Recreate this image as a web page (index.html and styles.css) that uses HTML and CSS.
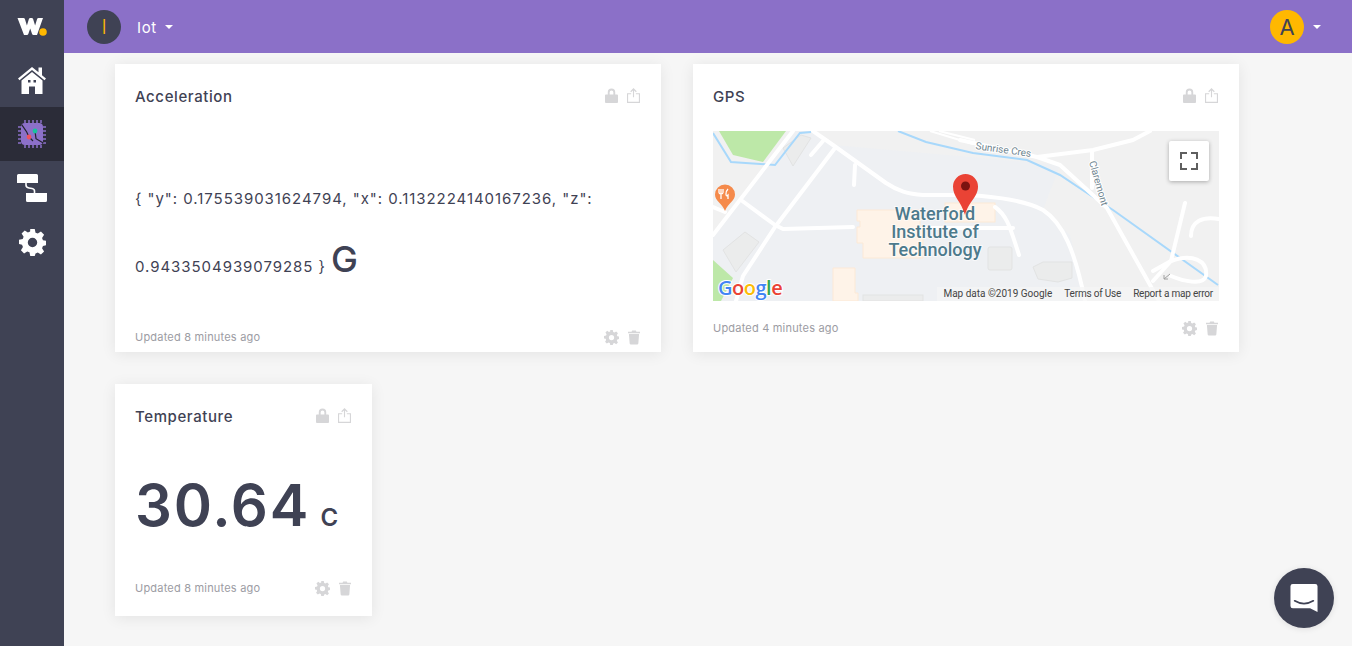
FILE: index.html
```html
<!DOCTYPE html>
<html lang="en">
<head>
    <meta charset="UTF-8">
    <meta name="viewport" content="width=device-width, initial-scale=1.0">
    <title>Dashboard</title>
    <link rel="stylesheet" href="styles.css">
</head>
<body>
    <svg class="defs" width="0" height="0">
        <symbol id="i-lock" viewBox="0 0 14 16">
            <path d="M3 7V4.500a4 4 0 0 1 8 0V7h2a1 1 0 0 1 1 1v7a1 1 0 0 1-1 1H1a1 1 0 0 1-1-1V8a1 1 0 0 1 1-1h2zm2 0h4V4.500a2 2 0 0 0-4 0V7z" fill-rule="evenodd"/>
        </symbol>
        <symbol id="i-share" viewBox="0 0 14 16">
            <path d="M7 0l3.500 3.500-.9.900L7.600 2.500V10H6.400V2.500L4.400 4.400l-.9-.9z"/>
            <path d="M4.500 5.500V6.700H1.200v8.100h11.600V6.700H9.500V5.500H14V16H0V5.500z"/>
        </symbol>
        <symbol id="i-gear" viewBox="0 0 24 24">
            <path fill-rule="evenodd" d="M10 0h4l.7 3.300 2 .8L19.500 2.300l2.800 2.800-1.800 2.800.8 2 3.300.7v3.800l-3.300.7-.8 2 1.800 2.800-2.800 2.800-2.800-1.800-2 .8L14 24h-4l-.7-3.300-2-.8-2.800 1.800-2.800-2.800 1.800-2.800-.8-2L0 13.400V9.600l3.300-.7.800-2-1.800-2.800 2.800-2.800 2.800 1.800 2-.8zM12 7.800a4.200 4.200 0 1 0 0 8.400 4.200 4.200 0 0 0 0-8.400z"/>
        </symbol>
        <symbol id="i-trash" viewBox="0 0 13 15">
            <path d="M4.500 0h4l.6 1.200H13v1.600H0V1.200h3.900zM1 3.800h11l-.8 10.300a1 1 0 0 1-1 .9H2.800a1 1 0 0 1-1-.9z"/>
        </symbol>
    </svg>

    <nav class="sidebar">
        <a class="logo">
            <svg width="30" height="20" viewBox="0 0 30 20">
                <path d="M0.500 1h6a1.500 1.500 0 0 1 1.400 1l2 6.500 2-6.500a1.500 1.500 0 0 1 1.400-1h1.400a1.500 1.500 0 0 1 1.400 1l2 6.500 2-6.500a1.500 1.500 0 0 1 1.400-1H26l-6 17h-3.500a1.500 1.500 0 0 1-1.400-1l-1.900-5.500-1.900 5.500a1.500 1.500 0 0 1-1.400 1H7z" fill="#fff"/>
                <circle cx="26" cy="15" r="3.800" fill="#ffb800"/>
            </svg>
        </a>
        <a class="nav-item">
            <svg width="28" height="30" viewBox="0 0 28 30">
                <path d="M14 2L0 13.500l1.500 1.800L14 5l12.500 10.300 1.500-1.800-4-3.300V2.500h-3.500v4.800z" fill="#fff"/>
                <path fill-rule="evenodd" d="M14 7L3.500 15.600V29h7.500v-7.500h6V29h7.500V15.600zM10 15h2.500v2.500H10zm5.500 0H18v2.500h-2.500z" fill="#fff"/>
            </svg>
        </a>
        <a class="nav-item active">
            <svg width="28" height="28" viewBox="0 0 28 28">
                <path d="M7 0v3M11 0v3M15 0v3M19 0v3M23 0v3M7 25v3M11 25v3M15 25v3M19 25v3M23 25v3M0 7h3M0 11h3M0 15h3M0 19h3M0 23h3M25 7h3M25 11h3M25 15h3M25 19h3M25 23h3" stroke="#8c70c9" stroke-width="1.500"/>
                <rect x="3" y="3" width="22" height="22" rx="4" fill="#8c70c9"/>
                <path d="M3.700 4.700L8.700 12 11 17 15 21M17 11L18 18.700 25.300 23" fill="none" stroke="#23242e" stroke-width="1.200"/>
                <circle cx="11" cy="17" r="2.400" fill="#f0525f"/>
                <circle cx="17" cy="11" r="2.400" fill="#19c2a0"/>
            </svg>
        </a>
        <a class="nav-item">
            <svg width="30" height="28" viewBox="0 0 30 28">
                <path d="M0 1.500A1.500 1.500 0 0 1 1.500 0h18A1.500 1.500 0 0 1 21 1.500V9H0zM9 19h21v7.500a1.500 1.500 0 0 1-1.500 1.500h-18A1.500 1.500 0 0 1 9 26.500z" fill="#fff"/>
                <path d="M9 9v2q0 2.500 3 3l3 .5q2.500.5 2.500 2.500v2" fill="none" stroke="#fff" stroke-width="1.600"/>
            </svg>
        </a>
        <a class="nav-item">
            <svg class="nav-gear" width="27" height="27"><use href="#i-gear"/></svg>
        </a>
    </nav>

    <div class="page">
        <header class="topbar">
            <div class="project">
                <span class="project-badge">I</span>
                <span class="project-name">Iot</span>
                <span class="caret"></span>
            </div>
            <div class="account">
                <span class="account-badge">A</span>
                <span class="caret"></span>
            </div>
        </header>

        <main class="widgets">
            <section class="card card-wide card-accel">
                <div class="card-head">
                    <h2>Acceleration</h2>
                    <div class="tools">
                        <svg class="lock" width="13" height="15"><use href="#i-lock"/></svg>
                        <svg class="share" width="13" height="15"><use href="#i-share"/></svg>
                    </div>
                </div>
                <div class="card-body">
                    <p class="reading">{ "y": 0.175539031624794, "x": 0.1132224140167236, "z": 0.9433504939079285 } <span class="reading-unit">G</span></p>
                </div>
                <div class="card-foot">
                    <span>Updated 8 minutes ago</span>
                    <div class="tools">
                        <svg width="15" height="15"><use href="#i-gear"/></svg>
                        <svg width="12" height="15"><use href="#i-trash"/></svg>
                    </div>
                </div>
            </section>

            <section class="card card-wide">
                <div class="card-head">
                    <h2>GPS</h2>
                    <div class="tools">
                        <svg class="lock" width="13" height="15"><use href="#i-lock"/></svg>
                        <svg class="share" width="13" height="15"><use href="#i-share"/></svg>
                    </div>
                </div>
                <div class="map">
                    <svg class="map-art" width="506" height="170" viewBox="0 0 506 170">
                        <rect width="506" height="170" fill="#f1f1f1"/>
                        <path d="M80 0L0 104V170H372L370 157 357 104 330 79 347 34 120 14 100 0z" fill="#eef0f3"/>
                        <path d="M6 0H73L50 31 20 24z" fill="#bde8a8"/>
                        <path d="M0 129L20 147 8 170H0z" fill="#bde8a8"/>
                        <g fill="#ebecec" stroke="#e2e3e3">
                            <path d="M10 119L32 101 46 111 23 141z"/>
                            <path d="M70 17L88 4 98 7 80 35z"/>
                            <rect x="275" y="116" width="24" height="23" rx="2"/>
                            <path d="M320 136L330 131H359V147L345 151 325 148z"/>
                            <rect x="150" y="164" width="60" height="6"/>
                        </g>
                        <g fill="#fef3e8" stroke="#fce9d6">
                            <path d="M144 79H207V97H210V127H150V112H144V96H147V90H144z"/>
                            <path d="M120 137H142V162H145V170H120z"/>
                            <rect x="232" y="72" width="50" height="19"/>
                        </g>
                        <g fill="none" stroke="#a8d8fb" stroke-width="2">
                            <path d="M0 2L18 31 62 34 87 2 98 1"/>
                            <path d="M185 0L213 11 260 22 314 29 347 44 377 64 400 79 505 154"/>
                        </g>
                        <g fill="none" stroke="#fff" stroke-width="4" stroke-linecap="round" stroke-linejoin="round">
                            <path d="M0 104L80 0"/>
                            <path d="M23 170L30 145 62 96 122 17"/>
                            <path d="M28 69L62 94 70 98 140 96"/>
                            <path d="M100 0L120 14 173 52C185 60 195 63 210 64L243 64C270 64 310 68 330 79 350 92 362 120 372 170"/>
                            <path d="M98 24L110 10"/>
                            <path d="M142 34L141 54"/>
                            <path d="M247 9L324 26 347 34 394 77 446 170"/>
                            <path d="M324 26L380 19 420 9 437 0"/>
                            <path d="M379 21V57"/>
                            <path d="M472 72L458 130 440 140"/>
                            <path d="M440 150L458 130C480 122 495 130 493 145 490 155 470 150 458 145"/>
                            <path d="M506 88C490 85 478 90 478 105"/>
                            <path d="M282 76C295 85 298 100 306 124"/>
                            <path d="M210 97H300"/>
                            <path d="M0 76L12 81"/>
                        </g>
                        <g fill="none" stroke="#fff" stroke-width="2">
                            <path d="M217 0L260 13"/>
                            <path d="M226 0L262 9"/>
                        </g>
                        <path d="M451 148l6-5M451 148h4M451 148v-4" fill="none" stroke="#a0a0a0" stroke-width="1"/>
                        <g>
                            <path d="M12 80C9 72 2 70 2 63.500a10 10 0 0 1 20 0C22 70 15 72 12 80z" fill="#f58a4b"/>
                            <path d="M8 58v10M6 58v3.500q0 1.500 2 1.500t2-1.500V58M15 58q-2 2-2 5t2 1v4" fill="none" stroke="#fff" stroke-width="1.300"/>
                        </g>
                        <g class="map-labels">
                            <text class="campus" x="222" y="89">Waterford</text>
                            <text class="campus" x="222" y="107">Institute of</text>
                            <text class="campus" x="222" y="125">Technology</text>
                        </g>
                        <text class="street" transform="translate(290 22) rotate(8)" text-anchor="middle">Sunrise Cres</text>
                        <text class="street" transform="translate(376 31) rotate(74)">Claremont</text>
                        <path d="M252 84C248 70 240 66 240 55.500a12.500 12.500 0 0 1 25 0C265 66 256 70 252 84z" fill="#ea4335"/>
                        <circle cx="252.500" cy="55" r="4.500" fill="#7c1310"/>
                        <text class="google" x="5" y="164"><tspan fill="#4285f4">G</tspan><tspan fill="#ea4335">o</tspan><tspan fill="#fbbc05">o</tspan><tspan fill="#4285f4">g</tspan><tspan fill="#34a853">l</tspan><tspan fill="#ea4335">e</tspan></text>
                    </svg>
                    <button class="map-full">
                        <svg width="18" height="18" viewBox="0 0 18 18"><path d="M1 7V1h6M11 1h6v6M17 11v6h-6M7 17H1v-6" fill="none" stroke="#5f5f5f" stroke-width="2"/></svg>
                    </button>
                    <div class="map-attrib">
                        <span>Map data ©2019 Google</span>
                        <span>Terms of Use</span>
                        <span>Report a map error</span>
                    </div>
                </div>
                <div class="card-foot">
                    <span>Updated 4 minutes ago</span>
                    <div class="tools">
                        <svg width="15" height="15"><use href="#i-gear"/></svg>
                        <svg width="12" height="15"><use href="#i-trash"/></svg>
                    </div>
                </div>
            </section>

            <section class="card card-narrow">
                <div class="card-head">
                    <h2>Temperature</h2>
                    <div class="tools">
                        <svg class="lock" width="13" height="15"><use href="#i-lock"/></svg>
                        <svg class="share" width="13" height="15"><use href="#i-share"/></svg>
                    </div>
                </div>
                <div class="card-body">
                    <p class="big-value">30.64 <span class="big-unit">C</span></p>
                </div>
                <div class="card-foot">
                    <span>Updated 8 minutes ago</span>
                    <div class="tools">
                        <svg width="15" height="15"><use href="#i-gear"/></svg>
                        <svg width="12" height="15"><use href="#i-trash"/></svg>
                    </div>
                </div>
            </section>
        </main>
    </div>

    <button class="chat">
        <svg width="28" height="30" viewBox="0 0 30 32">
            <path d="M3 1h24a2.500 2.500 0 0 1 2.500 2.500V31l-8-4H3a2.500 2.500 0 0 1-2.500-2.500v-21A2.500 2.500 0 0 1 3 1z" fill="#fff"/>
            <path d="M5 19q10 6 20 0" fill="none" stroke="#3f4254" stroke-width="1.800" stroke-linecap="round"/>
        </svg>
    </button>
</body>
</html>
```

FILE: styles.css
```css
* {
    box-sizing: border-box;
}
body {
    margin: 0;
    height: 646px;
    overflow: hidden;
    display: flex;
    background-color: #f6f6f6;
    color: #3f4254;
    font-family: Inter, "Liberation Sans", sans-serif;
}
.defs {
    position: absolute;
}

/* sidebar */
.sidebar {
    width: 64px;
    flex-shrink: 0;
    background-color: #3f4254;
}
.logo,
.nav-item {
    display: flex;
    justify-content: center;
    align-items: center;
    height: 54px;
}
.logo {
    height: 53px;
}
.nav-item.active {
    background-color: #2b2c38;
}
.nav-gear {
    fill: #fff;
}

/* top bar */
.page {
    flex: 1;
    min-width: 0;
}
.topbar {
    height: 53px;
    display: flex;
    justify-content: space-between;
    align-items: center;
    padding: 0 31px 0 23px;
    background-color: #8b70c8;
    color: #fff;
}
.project,
.account {
    display: flex;
    align-items: center;
}
.project-badge,
.account-badge {
    width: 34px;
    height: 34px;
    border-radius: 50%;
    display: flex;
    justify-content: center;
    align-items: center;
}
.project-badge {
    background-color: #3f4254;
    color: #ffb800;
    font-size: 20px;
    font-weight: 300;
}
.account-badge {
    background-color: #ffb800;
    color: #3f4254;
    font-size: 22px;
}
.project-name {
    margin: 2px 8px 0 16px;
    font-size: 15px;
    letter-spacing: 0.6px;
}
.account .caret {
    margin-left: 9px;
}
.caret {
    width: 0;
    height: 0;
    margin-top: 1px;
    border-left: 4px solid transparent;
    border-right: 4px solid transparent;
    border-top: 4px solid #fff;
}

/* cards */
.widgets {
    display: flex;
    flex-wrap: wrap;
    align-content: flex-start;
    gap: 32px;
    padding: 11px 0 0 51px;
}
.card {
    display: flex;
    flex-direction: column;
    padding: 20px 20px 16px;
    background-color: #fff;
    box-shadow: 0 2px 14px rgba(0, 0, 0, 0.08);
}
.card-wide {
    width: 546px;
    height: 288px;
}
.card-accel {
    padding-bottom: 7px;
}
.card-narrow {
    width: 257px;
    height: 232px;
    padding-bottom: 20px;
}
.card-narrow .card-body {
    padding-bottom: 22px;
}
.card-accel .card-body {
    padding-top: 6px;
}
.card-head {
    display: flex;
    justify-content: space-between;
    height: 24px;
    margin-bottom: 23px;
}
.card-head h2 {
    margin: 1px 0 0;
    font-size: 15px;
    font-weight: 500;
    line-height: 24px;
    letter-spacing: 0.6px;
}
.tools {
    display: flex;
    align-items: center;
    gap: 9px;
    margin-right: 1px;
    fill: #d6d6d8;
}
.card-head .tools {
    margin-top: -2px;
}
.card-body {
    flex: 1;
    display: flex;
    align-items: center;
    min-height: 0;
}
.card-foot {
    display: flex;
    justify-content: space-between;
    align-items: center;
    height: 16px;
    margin-top: auto;
    font-size: 11px;
    letter-spacing: 0.2px;
    color: #9c9ca3;
}

.reading {
    margin: 0;
    font-size: 15px;
    line-height: 68px;
    letter-spacing: 0.95px;
}
.reading-unit {
    font-size: 36px;
    font-weight: 500;
    line-height: 1;
    letter-spacing: 0;
}
.big-value {
    margin: 0;
    font-size: 58px;
    font-weight: 600;
    line-height: 1;
    letter-spacing: 1.8px;
    white-space: nowrap;
}
.big-unit {
    font-size: 24px;
    margin-left: -6px;
    letter-spacing: 0;
}

/* map */
.map {
    position: relative;
    height: 170px;
    overflow: hidden;
    font-family: Roboto, sans-serif;
}
.map-art {
    display: block;
}
.campus {
    font-family: Roboto, sans-serif;
    font-size: 18px;
    font-weight: 500;
    text-anchor: middle;
    fill: #4d7a8c;
    stroke: #fff;
    stroke-width: 2px;
    stroke-opacity: 0.6;
    paint-order: stroke;
}
.street {
    font-family: Roboto, sans-serif;
    font-size: 10px;
    fill: #6f8590;
    stroke: #fff;
    stroke-width: 2px;
    paint-order: stroke;
}
.google {
    font-family: "Open Sans", sans-serif;
    font-size: 20px;
    font-weight: 600;
    letter-spacing: -0.5px;
    stroke: #fff;
    stroke-width: 2px;
    paint-order: stroke;
}
.map-full {
    position: absolute;
    top: 10px;
    right: 10px;
    width: 40px;
    height: 40px;
    padding: 0;
    display: flex;
    justify-content: center;
    align-items: center;
    border: 0;
    border-radius: 2px;
    background-color: #fff;
    box-shadow: 0 1px 4px rgba(0, 0, 0, 0.3);
}
.map-attrib {
    position: absolute;
    right: 0;
    bottom: 0;
    display: flex;
    gap: 12px;
    padding: 0 6px;
    height: 14px;
    line-height: 14px;
    font-size: 10px;
    letter-spacing: -0.2px;
    color: #444;
    background-color: rgba(245, 245, 245, 0.7);
}
.map-attrib span:first-child {
    letter-spacing: 0;
}

.chat {
    position: fixed;
    right: 18px;
    bottom: 18px;
    width: 60px;
    height: 60px;
    padding: 0;
    display: flex;
    justify-content: center;
    align-items: center;
    border: 0;
    border-radius: 50%;
    background-color: #3f4254;
    box-shadow: 0 1px 6px rgba(0, 0, 0, 0.1);
}
```
